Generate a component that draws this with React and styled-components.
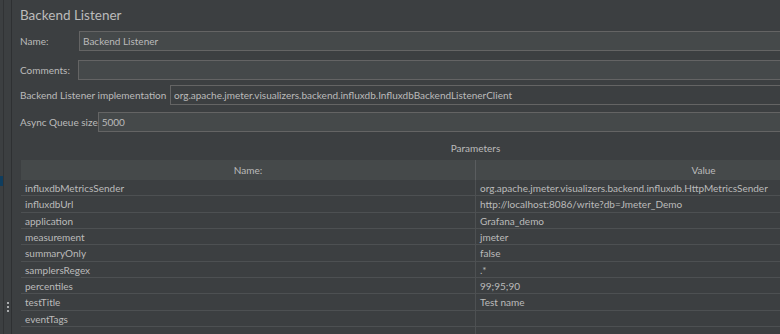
import styled, { createGlobalStyle } from "styled-components";

const GlobalStyle = createGlobalStyle`
  html, body {
    margin: 0;
    padding: 0;
    background: #3c3f41;
    overflow: hidden;
  }
`;

const params = [
  ["influxdbMetricsSender", "org.apache.jmeter.visualizers.backend.influxdb.HttpMetricsSender"],
  ["influxdbUrl", "http://localhost:8086/write?db=Jmeter_Demo"],
  ["application", "Grafana_demo"],
  ["measurement", "jmeter"],
  ["summaryOnly", "false"],
  ["samplersRegex", ".*"],
  ["percentiles", "99;95;90"],
  ["testTitle", "Test name"],
  ["eventTags", ""],
  ["", ""],
];

export default function App() {
  return (
    <Frame>
      <GlobalStyle />
      <Gutter>
        <Edge>
          <Marker />
        </Edge>
        <Rail>
          <Grip>
            <span />
            <span />
            <span />
          </Grip>
        </Rail>
      </Gutter>

      <Main>
        <Title>Backend Listener</Title>

        <FieldRow $top={7}>
          <Label $w={59}>Name:</Label>
          <Field readOnly defaultValue="Backend Listener" />
        </FieldRow>
        <FieldRow $top={9}>
          <Label $w={58}>Comments:</Label>
          <Field readOnly defaultValue="" />
        </FieldRow>
        <FieldRow $top={5}>
          <Label $w={150}>Backend Listener implementation</Label>
          <Field
            $plain
            readOnly
            defaultValue="org.apache.jmeter.visualizers.backend.influxdb.InfluxdbBackendListenerClient"
          />
        </FieldRow>
        <FieldRow $top={7}>
          <Label $w={77}>Async Queue size</Label>
          <Field readOnly defaultValue="5000" />
        </FieldRow>

        <Caption>Parameters</Caption>

        <Table>
          <HeadCell $first>Name:</HeadCell>
          <HeadCell>Value</HeadCell>
          {params.map(([name, value], i) => (
            <Row key={i}>
              <Cell $first>{name}</Cell>
              <Cell>{value}</Cell>
            </Row>
          ))}
        </Table>
      </Main>
    </Frame>
  );
}

const Frame = styled.div`
  display: flex;
  width: 780px;
  height: 334px;
  overflow: hidden;
  background: #3c3f41;
  color: #bbbbbb;
  font-family: Lato, "Liberation Sans", sans-serif;
  font-size: 10px;
`;

const Gutter = styled.div`
  flex: 0 0 12px;
  display: flex;
`;

const Edge = styled.div`
  width: 3px;
  display: flex;
  flex-direction: column;
`;

const Marker = styled.div`
  margin-top: 176px;
  height: 10px;
  background: #0f3d5e;
`;

const Rail = styled.div`
  width: 9px;
  box-sizing: border-box;
  border-left: 1px solid #313335;
  border-right: 1px solid #2e3032;
  display: flex;
  flex-direction: column;
  align-items: center;
`;

const Grip = styled.div`
  margin-top: auto;
  margin-bottom: 22px;
  display: flex;
  flex-direction: column;
  gap: 2px;

  span {
    width: 2px;
    height: 2px;
    background: #a9abad;
  }
`;

const Main = styled.div`
  flex: 0 0 auto;
  width: 920px;
  padding-left: 8px;
  display: flex;
  flex-direction: column;
`;

const Title = styled.div`
  height: 24px;
  line-height: 30px;
  font-size: 13.5px;
`;

const FieldRow = styled.div`
  display: flex;
  align-items: center;
  height: 20px;
  margin-top: ${(p) => p.$top}px;
`;

const Label = styled.div`
  flex: 0 0 ${(p) => p.$w}px;
  white-space: nowrap;
`;

const Field = styled.input`
  flex: 1;
  min-width: 0;
  height: 20px;
  box-sizing: border-box;
  margin: 0;
  padding: 0 3px;
  border: 1px solid #646464;
  background: ${(p) => (p.$plain ? "#3c3f41" : "#45494a")};
  color: #bbbbbb;
  font: inherit;
  outline: none;
`;

const Caption = styled.div`
  margin-top: 8px;
  height: 16px;
  line-height: 16px;
  width: 911px;
  text-align: center;
`;

const Table = styled.div`
  margin-top: 4px;
  margin-left: 1px;
  width: 910px;
  display: grid;
  grid-template-columns: 455px 455px;
`;

const HeadCell = styled.div`
  height: 20px;
  line-height: 20px;
  text-align: center;
  background: #45494a;
  border-right: ${(p) => (p.$first ? "1px solid #5a5d5f" : "none")};
`;

const Row = styled.div`
  display: contents;
`;

const Cell = styled.div`
  height: 16.33px;
  line-height: 16px;
  box-sizing: border-box;
  padding-left: 4px;
  white-space: nowrap;
  border-bottom: 1px solid #4d5052;
  border-right: ${(p) => (p.$first ? "1px solid #4d5052" : "none")};
`;
